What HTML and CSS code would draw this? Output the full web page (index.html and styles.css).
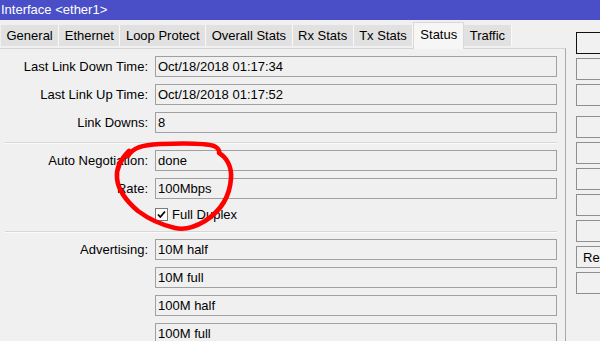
FILE: index.html
```html
<!DOCTYPE html>
<html lang="en">
<head>
    <meta charset="UTF-8">
    <meta name="viewport" content="width=device-width, initial-scale=1.0">
    <title>Interface &lt;ether1&gt;</title>
    <link rel="stylesheet" href="styles.css">
</head>
<body>
    <div class="titlebar">Interface &lt;ether1&gt;</div>

    <div class="window">
        <div class="main">
            <!-- Tabs -->
            <div class="tabs">
                <div class="tab">General</div>
                <div class="tab">Ethernet</div>
                <div class="tab">Loop Protect</div>
                <div class="tab">Overall Stats</div>
                <div class="tab">Rx Stats</div>
                <div class="tab">Tx Stats</div>
                <div class="tab active">Status</div>
                <div class="tab">Traffic</div>
            </div>

            <!-- Status panel -->
            <div class="panel">
                <div class="field-row">
                    <label>Last Link Down Time:</label>
                    <div class="field">Oct/18/2018 01:17:34</div>
                </div>
                <div class="field-row">
                    <label>Last Link Up Time:</label>
                    <div class="field">Oct/18/2018 01:17:52</div>
                </div>
                <div class="field-row">
                    <label>Link Downs:</label>
                    <div class="field">8</div>
                </div>

                <div class="separator"></div>

                <div class="field-row">
                    <label>Auto Negotiation:</label>
                    <div class="field">done</div>
                </div>
                <div class="field-row">
                    <label>Rate:</label>
                    <div class="field">100Mbps</div>
                </div>
                <div class="field-row check-row">
                    <span></span>
                    <div class="check">
                        <span class="check-box">
                            <svg width="11" height="11" viewBox="0 0 11 11"><path d="M2 5.5 L4.3 8 L9 2.5" fill="none" stroke="#000" stroke-width="1.8"/></svg>
                        </span>
                        Full Duplex
                    </div>
                </div>

                <div class="separator"></div>

                <div class="field-row">
                    <label>Advertising:</label>
                    <div class="field">10M half</div>
                </div>
                <div class="field-row">
                    <span></span>
                    <div class="field">10M full</div>
                </div>
                <div class="field-row">
                    <span></span>
                    <div class="field">100M half</div>
                </div>
                <div class="field-row">
                    <span></span>
                    <div class="field">100M full</div>
                </div>
            </div>
        </div>

        <!-- Side buttons -->
        <div class="side">
            <button class="btn default"></button>
            <button class="btn"></button>
            <button class="btn"></button>
            <button class="btn spaced"></button>
            <button class="btn"></button>
            <button class="btn"></button>
            <button class="btn"></button>
            <button class="btn"></button>
            <button class="btn">Reset Counters</button>
            <button class="btn"></button>
        </div>
    </div>

    <!-- Hand-drawn annotation -->
    <svg class="scribble" width="600" height="341" viewBox="0 0 600 341">
        <path d="M128 156 C133 148 141 145 160 144 C185 143 205 143 214 146 C218 148 220 150 219 153 C226 157 232 166 231 178 C230 195 222 210 205 221 C195 227 184 230 175 228 C162 225 150 220 138 211 C125 200 118 190 117 178 C116 168 120 160 129 151"
              fill="none" stroke="#f00" stroke-width="4.6" stroke-linecap="round" stroke-linejoin="round"/>
    </svg>
</body>
</html>
```

FILE: styles.css
```css
:root {
    --bg: #f0f0f0;
    --title: #4a4fc8;
    --field-border: #a0a0a0;
}

/* Base */
body {
    margin: 0;
    width: 600px;
    height: 341px;
    overflow: hidden;
    position: relative;
    background: var(--bg);
    font-family: 'Liberation Sans', Arial, sans-serif;
    font-size: 13px;
    color: #000;
}

.titlebar {
    height: 20px;
    line-height: 20px;
    padding-left: 1px;
    background: var(--title);
    color: #fff;
}

.window {
    display: flex;
}

.main {
    width: 566px;
    flex-shrink: 0;
}

/* Tabs */
.tabs {
    display: flex;
    align-items: flex-end;
    height: 28px;
    padding-left: 1px;
}

.tab {
    height: 21px;
    line-height: 21px;
    margin-bottom: 2px;
    padding: 0 5.5px;
    background: #e1e1e1;
    border-right: 1px solid #f8f8f8;
    white-space: nowrap;
}

.tab.active {
    height: 26px;
    line-height: 24px;
    margin-bottom: -1px;
    padding: 0 6px;
    background: #f6f6f6;
    border: 1px solid #d9d9d9;
    border-bottom: none;
    position: relative;
    z-index: 1;
}

/* Panel */
.panel {
    border-top: 1px solid #d4d4d4;
    border-right: 1px solid #a8a8a8;
    padding: 7px 8px 0 4px;
    height: 300px;
}

.field-row {
    display: grid;
    grid-template-columns: 144px 402px;
    column-gap: 7px;
    margin-bottom: 7px;
}

.field-row label {
    text-align: right;
    line-height: 21px;
    white-space: nowrap;
}

.field {
    height: 19px;
    line-height: 19px;
    padding-left: 2px;
    border: 1px solid var(--field-border);
    background: var(--bg);
}

.check-row {
    margin-bottom: 0;
}

.check {
    display: flex;
    align-items: center;
    gap: 4px;
    height: 16px;
}

.check-box {
    width: 11px;
    height: 11px;
    border: 1px solid #7a7a7a;
    background: #fff;
    display: flex;
}

.separator {
    margin: 9px 0 6px 1px;
    border-top: 1px solid #d8d8d8;
    border-bottom: 1px solid #fbfbfb;
}

/* Side buttons */
.side {
    display: flex;
    flex-direction: column;
    gap: 4px;
    margin-left: 10px;
    padding-top: 12px;
}

.btn {
    width: 140px;
    height: 22px;
    padding: 0 6px;
    text-align: left;
    font: inherit;
    color: #000;
    background: #f1f1f1;
    border: 1px solid #8f8f8f;
}

.btn.default {
    border-color: #111;
}

.btn.spaced {
    margin-top: 6px;
}

/* Annotation overlay */
.scribble {
    position: absolute;
    left: 0;
    top: 0;
    pointer-events: none;
}
```
